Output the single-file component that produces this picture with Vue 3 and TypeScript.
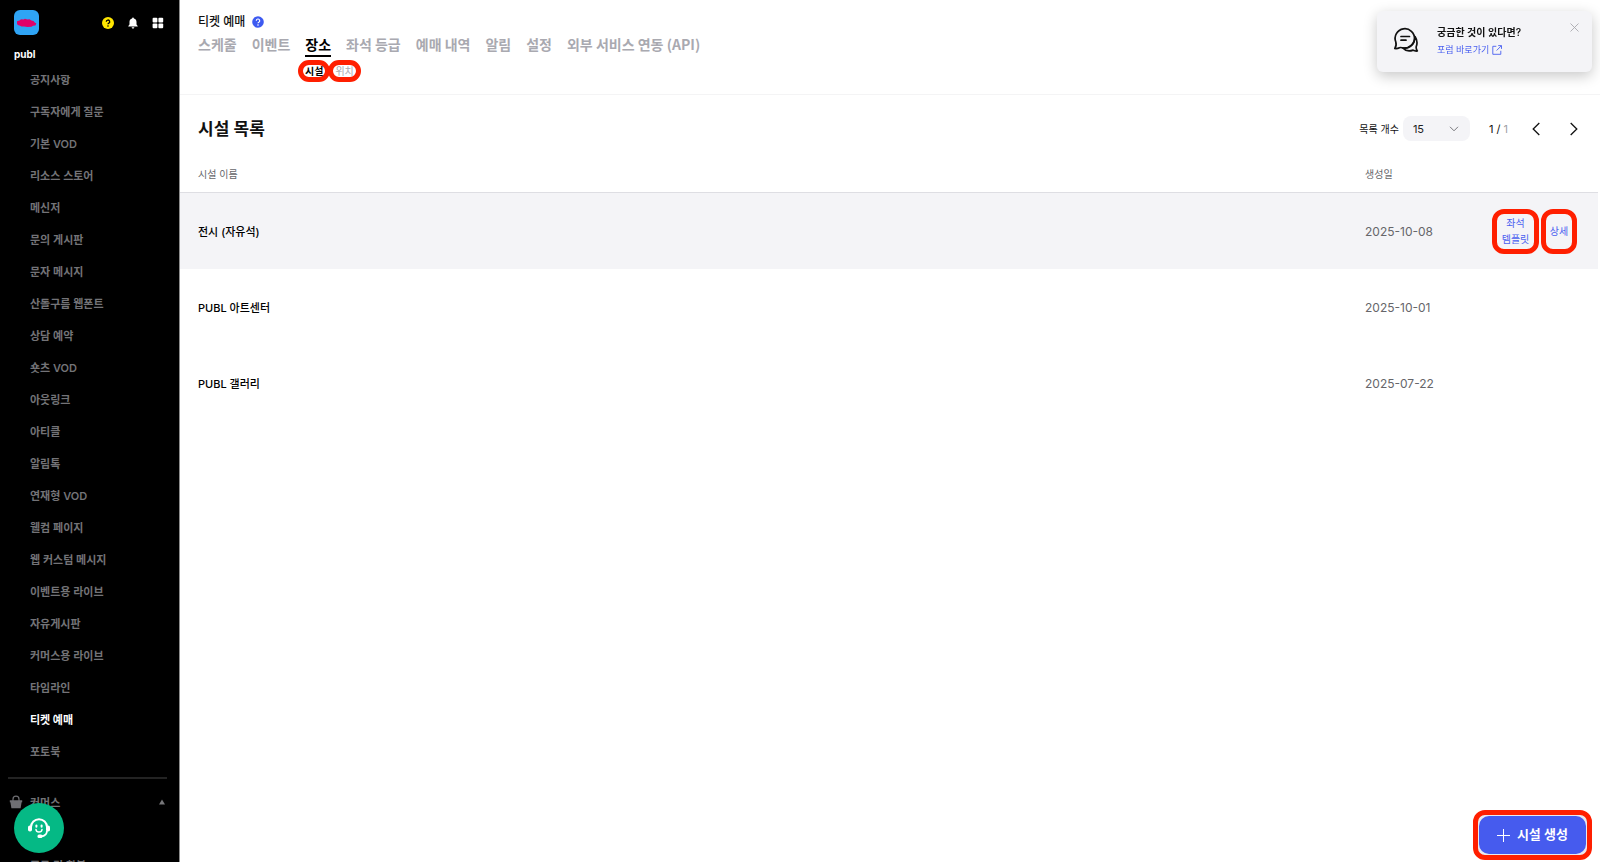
<script setup lang="ts">
import { ref } from 'vue'

interface Facility {
  name: string
  created: string
  active?: boolean
}

const menu: string[] = [
  '공지사항', '구독자에게 질문', '기본 VOD', '리소스 스토어', '메신저', '문의 게시판',
  '문자 메시지', '산돌구름 웹폰트', '상담 예약', '숏츠 VOD', '아웃링크', '아티클',
  '알림톡', '연재형 VOD', '웰컴 페이지', '웹 커스텀 메시지', '이벤트용 라이브',
  '자유게시판', '커머스용 라이브', '타임라인', '티켓 예매', '포토북',
]
const currentMenu = '티켓 예매'

const tabs: string[] = ['스케줄', '이벤트', '장소', '좌석 등급', '예매 내역', '알림', '설정', '외부 서비스 연동 (API)']
const currentTab = '장소'

const facilities: Facility[] = [
  { name: '전시 (자유석)', created: '2025-10-08', active: true },
  { name: 'PUBL 아트센터', created: '2025-10-01' },
  { name: 'PUBL 갤러리', created: '2025-07-22' },
]

const pageSize = ref('15')
const noticeOpen = ref(true)
</script>

<template>
  <div class="app">
    <aside class="sidebar">
      <header class="side-head">
        <div class="side-top">
          <a href="#" class="logo" aria-label="publ">
            <svg width="25" height="25" viewBox="0 0 25 25">
              <rect width="25" height="25" rx="6" fill="#2fa4f5" />
              <path d="M3 11.200 5.500 10.500 7 9.300l2.500.2L11 8.800l2.500.6 2-.2 2 1.200 2 .6 1.500 1.800 1.300.4-.8 2.200-2.500.3-1.500 1-4 .4-3.500-.6-2.500.1-2-1.200-1.800-.4-.7-1.500z" fill="#e00068" />
            </svg>
          </a>
          <div class="side-tools">
            <button type="button" aria-label="도움말">
              <svg width="12" height="12" viewBox="0 0 12 12">
                <circle cx="6" cy="6" r="6" fill="#ffe600" />
                <path d="M4.300 4.700a1.700 1.700 0 1 1 2.500 1.500c-.6.3-.8.600-.8 1.100" fill="none" stroke="#000" stroke-width="1.300" />
                <circle cx="6" cy="9" r=".8" />
              </svg>
            </button>
            <button type="button" aria-label="알림">
              <svg width="12" height="12" viewBox="0 0 12 12" fill="#fff">
                <path d="M6 .5c.6 0 .9.400.9.900C8.700 1.800 9.500 3.200 9.500 5v2.500L10.700 9v.5H1.300V9l1.200-1.500V5c0-1.800.8-3.200 2.600-3.600 0-.5.300-.9.900-.9zM4.700 10.200h2.600c0 .8-.5 1.300-1.300 1.300s-1.300-.5-1.300-1.300z" />
              </svg>
            </button>
            <button type="button" aria-label="전체 서비스">
              <svg width="12" height="12" viewBox="0 0 12 12" fill="#fff">
                <rect x=".6" y=".8" width="4.800" height="4.800" rx="1" />
                <rect x="6.400" y=".8" width="4.800" height="4.800" rx="1" />
                <rect x=".6" y="6.500" width="4.800" height="4.800" rx="1" />
                <rect x="6.400" y="6.500" width="4.800" height="4.800" rx="1" />
              </svg>
            </button>
          </div>
        </div>
        <strong class="brand">publ</strong>
      </header>
      <div class="side-scroll">
        <nav class="side-nav" aria-label="서비스">
          <a v-for="item in menu" :key="item" href="#" :class="{ on: item === currentMenu }">{{ item }}</a>
        </nav>
        <hr class="side-rule" />
        <button type="button" class="group">
          <svg width="14" height="14" viewBox="0 0 14 14">
            <path d="M4 6V4.200a3 3 0 0 1 6 0V6" fill="none" stroke="#6f6f73" stroke-width="1.200" />
            <path d="M.8 5.300h12.400v2h-.6l-1 6H2.400l-1-6H.8z" fill="#6f6f73" />
          </svg>
          <span>커머스</span>
          <svg class="caret" width="6" height="6" viewBox="0 0 6 6"><path d="M3 .5 6 5.500H0z" fill="#77777a" /></svg>
        </button>
        <nav class="side-nav group-nav" aria-label="커머스">
          <a href="#">주문 및 환불</a>
        </nav>
      </div>
      <button type="button" class="chat" aria-label="상담 채팅">
        <svg width="24" height="24" viewBox="0 0 24 24">
          <path d="M4 12.500V11a8 7.800 0 0 1 16 0v1.500" fill="none" stroke="#fff" stroke-width="2" />
          <rect x="1" y="9.500" width="4" height="6" rx="1.800" fill="#fff" />
          <rect x="19" y="9.500" width="4" height="6" rx="1.800" fill="#fff" />
          <path d="M20 14.500c0 3.200-2.200 5.600-6 5.900" fill="none" stroke="#fff" stroke-width="1.800" />
          <rect x="10.500" y="18.500" width="5" height="3.400" rx="1.500" fill="#fff" />
          <rect x="8.400" y="8.500" width="2" height="3.200" rx="1" fill="#fff" />
          <rect x="13.600" y="8.500" width="2" height="3.200" rx="1" fill="#fff" />
          <path d="M9 13.500c.4 3.400 5.600 3.400 6 0" fill="none" stroke="#fff" stroke-width="1.500" stroke-linecap="round" />
        </svg>
      </button>
    </aside>

    <main class="main">
      <header class="top">
        <div class="service">
          <h1>티켓 예매</h1>
          <button type="button" aria-label="티켓 예매 도움말">
            <svg width="12" height="12" viewBox="0 0 12 12">
              <circle cx="6" cy="6" r="5.800" fill="#3d5af1" />
              <path d="M4.300 4.700a1.700 1.700 0 1 1 2.500 1.500c-.6.3-.8.600-.8 1.100" fill="none" stroke="#fff" stroke-width="1.200" />
              <circle cx="6" cy="9" r=".8" fill="#fff" />
            </svg>
          </button>
        </div>
        <nav class="tabs" aria-label="티켓 예매 메뉴">
          <a v-for="tab in tabs" :key="tab" href="#" :class="{ on: tab === currentTab }">{{ tab }}</a>
        </nav>
        <nav class="subtabs" aria-label="장소 메뉴">
          <a href="#" class="on">시설</a>
          <a href="#">위치</a>
        </nav>
      </header>

      <section class="list">
        <div class="bar">
          <h2>시설 목록</h2>
          <div class="pager">
            <label for="page-size">목록 개수</label>
            <span class="select">
              <select id="page-size" v-model="pageSize">
                <option>15</option>
                <option>30</option>
                <option>50</option>
              </select>
              <svg width="10" height="6" viewBox="0 0 10 6"><path d="M1 .8 5 4.800 9 .8" fill="none" stroke="#77777c" /></svg>
            </span>
            <span class="pages">1 / <em>1</em></span>
            <button type="button" aria-label="이전">
              <svg width="8" height="14" viewBox="0 0 8 14"><path d="M7.300 1 1.200 7l6.100 6" fill="none" stroke="#111" stroke-width="1.300" /></svg>
            </button>
            <button type="button" aria-label="다음">
              <svg width="8" height="14" viewBox="0 0 8 14"><path d="m.7 1 6.100 6-6.100 6" fill="none" stroke="#111" stroke-width="1.300" /></svg>
            </button>
          </div>
        </div>

        <table>
          <thead>
            <tr>
              <th scope="col">시설 이름</th>
              <th scope="col" class="date">생성일</th>
              <th class="act"></th>
            </tr>
          </thead>
          <tbody>
            <tr v-for="f in facilities" :key="f.name" :class="{ active: f.active }">
              <td class="name">{{ f.name }}</td>
              <td class="created">{{ f.created }}</td>
              <td>
                <div v-if="f.active" class="actions">
                  <button type="button" class="seat">좌석<br />템플릿</button>
                  <button type="button" class="detail">상세</button>
                </div>
              </td>
            </tr>
          </tbody>
        </table>
      </section>
    </main>

    <aside v-if="noticeOpen" class="notice">
      <svg class="talk" width="26" height="26" viewBox="0 0 26 26" fill="none" stroke="#111" stroke-width="1.700" stroke-linejoin="round" stroke-linecap="round">
        <path d="M2.800 15A9.700 9.700 0 1 1 9 20.700c-1.200-.3-1.800-.4-2.600 0-1.200.7-2.700 1-4.600.8 1.300-1.800 1.700-3.800 1-6.500z" />
        <path d="M22 9.500c2 3 2.500 7 1.200 10.300-.2 1.500.3 2.900 1.100 4.200-1.600.2-3-.1-4.200-.9-3.600 1.400-7.400.9-10-2 6.800.5 11.800-4.600 11.900-11.600z" />
        <path d="M8 9.500h8.500M8 13.200h5" />
      </svg>
      <div class="notice-text">
        <strong>궁금한 것이 있다면?</strong>
        <a href="#">포럼 바로가기
          <svg width="10" height="10" viewBox="0 0 10 10" fill="none" stroke="#4a60f0" stroke-width=".9"><path d="M4.300 1.300H.8v8h8V5.800M6.200.6h3.300v3.300M9.300.8 4.600 5.500" /></svg>
        </a>
      </div>
      <button type="button" class="close" aria-label="닫기" @click="noticeOpen = false">
        <svg width="9" height="9" viewBox="0 0 9 9"><path d="m.5.5 8 8m0-8-8 8" fill="none" stroke="#a9a9ae" stroke-width=".9" /></svg>
      </button>
    </aside>

    <div class="create-ring">
      <button type="button" class="create">
        <svg width="13" height="13" viewBox="0 0 13 13"><path d="M6.500 0v13M0 6.500h13" fill="none" stroke="#fff" /></svg>
        <span>시설 생성</span>
      </button>
    </div>
  </div>
</template>

<style>
body {
  margin: 0;
  background: #fff;
}
</style>

<style scoped>
.app {
  display: flex;
  height: 100vh;
  overflow: hidden;
  color: #111;
  font-family: Inter, "Noto Sans CJK KR", sans-serif;
}
.app * {
  box-sizing: border-box;
}
a {
  color: inherit;
  text-decoration: none;
}
button {
  padding: 0;
  border: 0;
  background: none;
  color: inherit;
  font: inherit;
  cursor: pointer;
}
svg {
  display: block;
  flex: none;
}
h1,
h2 {
  margin: 0;
}

.sidebar {
  display: flex;
  flex: none;
  flex-direction: column;
  width: 180px;
  border-right: 1px solid #8c8c8c;
  background: #000;
}
.side-head {
  flex: none;
  height: 75px;
  padding: 10px 15px 0 14px;
}
.side-top {
  display: flex;
  align-items: center;
  justify-content: space-between;
}
.side-tools {
  display: flex;
  gap: 13px;
}
.brand {
  display: block;
  margin-top: 11px;
  color: #fff;
  font-size: 10px;
  font-weight: 700;
  line-height: 16px;
}
.side-scroll {
  flex: 1;
  min-height: 0;
  overflow: hidden;
}
.side-nav {
  display: flex;
  flex-direction: column;
  margin-top: -11px;
  padding-left: 30px;
}
.side-nav a {
  color: #737377;
  font-size: 11px;
  font-weight: 600;
  line-height: 32px;
  white-space: nowrap;
}
.side-nav a.on {
  color: #fff;
  font-weight: 700;
}
.side-rule {
  height: 2px;
  margin: 9px 12px 0 8px;
  border: 0;
  background: #232323;
}
.group {
  display: flex;
  align-items: center;
  gap: 7px;
  width: 100%;
  height: 32px;
  margin-top: 7px;
  padding: 0 14px 0 9px;
  color: #737377;
  font-size: 11px;
  font-weight: 600;
}
.caret {
  margin-left: auto;
}
.group-nav {
  margin-top: 32px;
}
.chat {
  position: fixed;
  bottom: 9px;
  left: 14px;
  display: grid;
  place-items: center;
  width: 50px;
  height: 50px;
  border-radius: 50%;
  background: #05b985;
}

.main {
  flex: 1;
  min-width: 0;
}
.top {
  height: 95px;
  padding: 15px 18px 0;
  border-bottom: 1px solid #f4f4f5;
}
.service {
  display: flex;
  align-items: center;
  gap: 7px;
}
.service h1 {
  font-size: 12px;
  font-weight: 500;
  line-height: 14px;
}
.tabs {
  display: flex;
  gap: 15px;
  margin-top: 5px;
  color: #a9a9b0;
  font-family: "Noto Sans CJK KR", sans-serif;
  font-size: 14px;
  font-weight: 600;
  line-height: 21px;
  white-space: nowrap;
}
.tabs a {
  border-bottom: 2px solid transparent;
}
.tabs .on {
  border-color: #000;
  color: #000;
}
.subtabs {
  display: flex;
  margin-top: 3px;
  padding-left: 100px;
  color: #a9a9b0;
  font-size: 10px;
  line-height: 12px;
}
.subtabs a {
  padding: 0 2px;
  border: 5px solid #ff1f00;
  border-radius: 11px;
}
.subtabs a + a {
  margin-left: -2px;
}
.subtabs .on {
  color: #000;
  font-weight: 600;
}

.list {
  margin-right: 2px;
}
.bar {
  display: flex;
  align-items: center;
  justify-content: space-between;
  height: 67px;
  padding: 0 20px 0 18px;
}
.bar h2 {
  padding-bottom: 3px;
  font-size: 17px;
  font-weight: 600;
}
.pager {
  display: flex;
  align-items: center;
  font-size: 10px;
  white-space: nowrap;
}
.pager label {
  margin-right: 4px;
}
.select {
  display: flex;
  align-items: center;
  margin-right: 19px;
}
.select select {
  width: 67px;
  height: 25px;
  padding: 0 10px;
  border: 0;
  border-radius: 8px;
  background: #f4f4f7;
  color: #222;
  appearance: none;
  font: 11px Inter, "Noto Sans CJK KR", sans-serif;
}
.select svg {
  margin-left: -21px;
  margin-right: 11px;
  pointer-events: none;
}
.pages {
  margin-right: 24px;
  font-size: 11px;
}
.pages em {
  color: #a0a0a6;
  font-style: normal;
}
.pager button + button {
  margin-left: 30px;
}

table {
  width: 100%;
  border-spacing: 0;
  table-layout: fixed;
}
th {
  height: 30px;
  padding: 0 0 8px;
  color: #66666a;
  font-size: 10px;
  font-weight: 400;
  text-align: left;
}
th:first-child,
td:first-child {
  padding-left: 18px;
}
.date {
  width: 127px;
}
.act {
  width: 106px;
}
td {
  height: 76px;
  padding: 0;
  font-size: 11px;
}
.active td {
  height: 77px;
  border-top: 1px solid #dedee3;
  background: #f4f4f7;
}
.name {
  padding-bottom: 1px;
  color: #000;
  font-weight: 500;
}
.created {
  color: #66666a;
  font-size: 12px;
}
.actions {
  display: flex;
  gap: 2px;
  color: #4a60f0;
  font-size: 10px;
  line-height: 16px;
}
.actions button {
  height: 45px;
  border: 5px solid #ff1f00;
  border-radius: 12px;
}
.seat {
  width: 47px;
}
.detail {
  width: 36px;
}

.notice {
  position: fixed;
  top: 11px;
  right: 8px;
  display: flex;
  align-items: flex-start;
  width: 215px;
  height: 61px;
  padding: 12px 13px 0 16px;
  border-radius: 6px;
  background: #f4f4f7;
  box-shadow: 0 4px 14px rgba(0, 0, 0, 0.22);
}
.talk {
  margin-top: 4px;
}
.notice-text {
  display: flex;
  flex-direction: column;
  margin-left: 18px;
  white-space: nowrap;
}
.notice-text strong {
  font-size: 10px;
  font-weight: 600;
  line-height: 18px;
}
.notice-text a {
  display: flex;
  align-items: center;
  gap: 3px;
  color: #4a60f0;
  font-size: 9px;
  line-height: 18px;
}
.close {
  margin-left: auto;
}

.create-ring {
  position: fixed;
  right: 8px;
  bottom: 2px;
  padding: 1px;
  border: 5px solid #ff1f00;
  border-radius: 12px;
  background: #e9e9ee;
}
.create {
  display: flex;
  align-items: center;
  gap: 7px;
  height: 38px;
  padding: 0 18px;
  border-radius: 10px;
  background: #465bee;
  color: #fff;
  font-size: 13px;
  font-weight: 600;
  white-space: nowrap;
}
.create span {
  padding-bottom: 3px;
}
</style>
